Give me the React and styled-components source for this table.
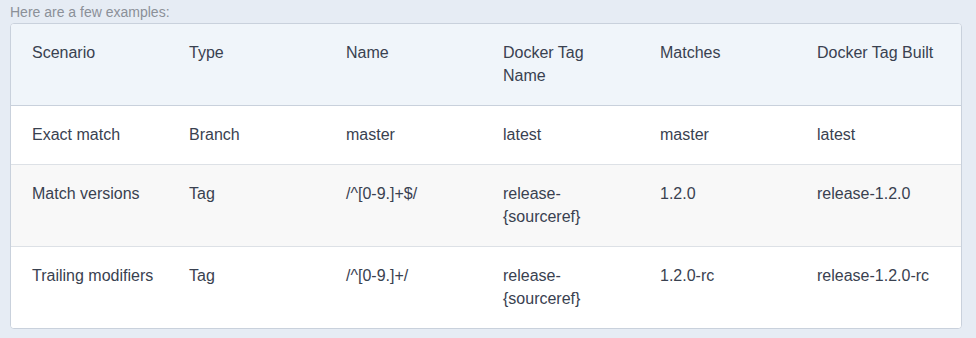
import React from 'react'
import styled, { createGlobalStyle } from 'styled-components'

const GlobalStyle = createGlobalStyle`
  body {
    margin: 0;
    background: #e6ecf4;
    font-family: "Liberation Sans", Arial, sans-serif;
  }
`

const Page = styled.div`
  padding: 2px 14px 8px 10px;
`

const Caption = styled.p`
  margin: 0 0 1px 0;
  font-size: 14px;
  line-height: 20px;
  color: #8b9098;
`

const Box = styled.div`
  border: 1px solid #c9d1dc;
  border-radius: 4px;
  overflow: hidden;
  background: #fff;
`

const Table = styled.table`
  width: 100%;
  border-collapse: collapse;
  table-layout: fixed;
  font-size: 16px;
  line-height: 23px;
  color: #394150;
`

const Col = styled.col`
  width: ${p => (p.$last ? 'auto' : '157px')};
`

const Head = styled.thead`
  background: #f0f5fa;
  border-bottom: 1px solid #c9d1dc;
`

const Th = styled.th`
  text-align: left;
  font-weight: normal;
  vertical-align: top;
  padding: 17px 10px 18px 21px;
`

const Row = styled.tr`
  background: ${p => (p.$striped ? '#f8f8f8' : '#fff')};
  & + & {
    border-top: 1px solid #dde1e6;
  }
`

const Td = styled.td`
  vertical-align: top;
  padding: 17px 10px 18px 21px;
`

const columns = ['Scenario', 'Type', 'Name', 'Docker Tag Name', 'Matches', 'Docker Tag Built']

const rows = [
  ['Exact match', 'Branch', 'master', 'latest', 'master', 'latest'],
  ['Match versions', 'Tag', '/^[0-9.]+$/', 'release-{sourceref}', '1.2.0', 'release-1.2.0'],
  ['Trailing modifiers', 'Tag', '/^[0-9.]+/', 'release-{sourceref}', '1.2.0-rc', 'release-1.2.0-rc'],
]

export default function App() {
  return (
    <>
      <GlobalStyle />
      <Page>
        <Caption>Here are a few examples:</Caption>
        <Box>
          <Table>
            <colgroup>
              {columns.map((c, i) => (
                <Col key={c} $last={i === columns.length - 1} />
              ))}
            </colgroup>
            <Head>
              <tr>
                {columns.map(c => (
                  <Th key={c}>{c}</Th>
                ))}
              </tr>
            </Head>
            <tbody>
              {rows.map((r, i) => (
                <Row key={i} $striped={i % 2 === 1}>
                  {r.map((cell, j) => (
                    <Td key={j}>{cell}</Td>
                  ))}
                </Row>
              ))}
            </tbody>
          </Table>
        </Box>
      </Page>
    </>
  )
}
